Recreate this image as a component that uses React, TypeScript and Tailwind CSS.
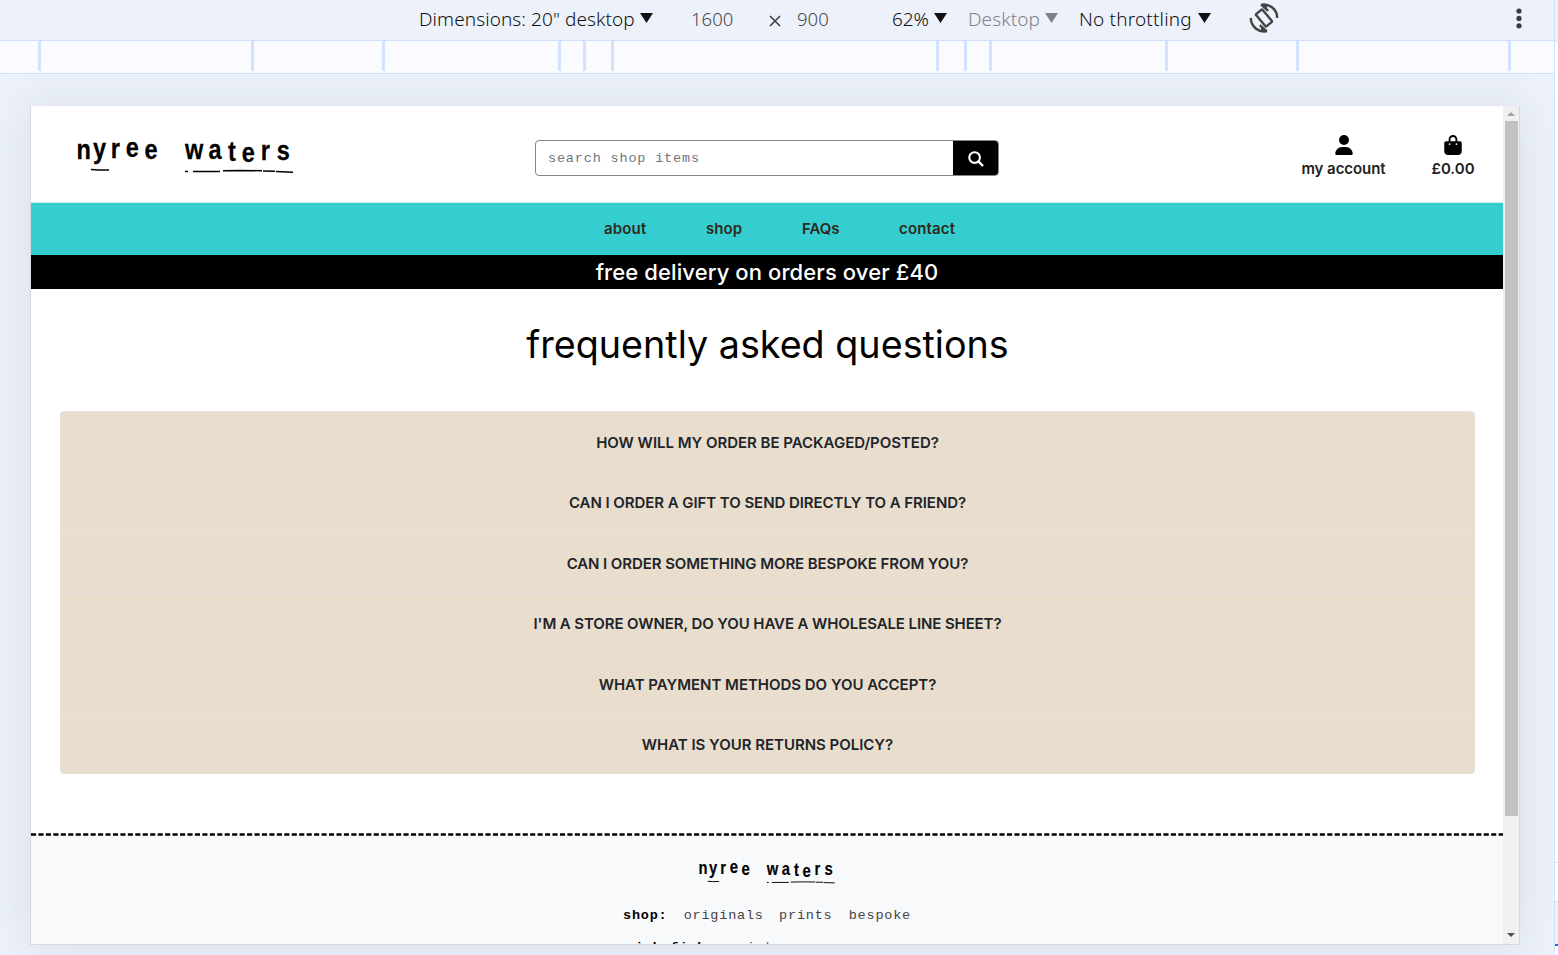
import React from "react";
import { FaUser, FaBagShopping } from "react-icons/fa6";

type Letter = { ch: string; x: number; y: number };

const letters: Letter[] = [
  { ch: "n", x: -0.6, y: 26.6 },
  { ch: "y", x: 16, y: 25.6 },
  { ch: "r", x: 33.8, y: 26 },
  { ch: "e", x: 48.8, y: 25 },
  { ch: "e", x: 67.6, y: 27.2 },
  { ch: "w", x: 108, y: 27 },
  { ch: "a", x: 131.5, y: 27 },
  { ch: "t", x: 151, y: 28.5 },
  { ch: "e", x: 164.8, y: 30 },
  { ch: "r", x: 183.7, y: 28 },
  { ch: "s", x: 199.8, y: 27.8 },
];

function Logo({ className }: { className: string }) {
  return (
    <svg viewBox="0 -6 218 46" className={`overflow-visible ${className}`} aria-label="nyree waters">
      {letters.map((l, i) => (
        <text
          key={i}
          transform={`translate(${l.x} ${l.y - 5}) scale(0.84 1)`}
          fontFamily="Liberation Sans, Arial, sans-serif"
          fontWeight="700"
          fontSize="28"
          fill="#000"
          stroke="#000"
          strokeWidth="0.3"
        >
          {l.ch}
        </text>
      ))}
      <path
        d="M14 32.6l8 .5 10-.2M108 34.4h3M116 34.4h27M146 33.8l18-.3 21 .2M186 34l12 .2M199 34.6l17 .6"
        stroke="#000"
        strokeWidth="1.5"
        fill="none"
      />
    </svg>
  );
}

function Caret({ className }: { className: string }) {
  return (
    <svg viewBox="0 0 13 10" className={`h-[10px] w-[13px] shrink-0 ${className}`}>
      <path d="M0 0h13L6.5 10z" fill="currentColor" />
    </svg>
  );
}

function RotateIcon() {
  return (
    <svg viewBox="0 0 30 30" className="mb-[2px] size-[30px] shrink-0" fill="none" stroke="#444" strokeWidth="2.4">
      <rect x="7" y="10.8" width="16" height="8.4" rx="1" transform="rotate(50 15 15)" />
      <path d="M12 1.8A13.4 13.4 0 0 1 28.2 15" />
      <path d="M18 28.2A13.4 13.4 0 0 1 1.8 15" />
      <path d="M12.2 1.6l7 6.2M17.8 28.4l-7-6.2" />
      <path d="M12.5 2l5.6 0 0 4.6zM17.5 28l-5.6 0 0-4.6z" fill="#444" stroke="none" />
    </svg>
  );
}

function Toolbar() {
  return (
    <div className="flex h-10 items-center pb-[2px] pl-[419px] font-['Noto_Sans','Open_Sans',sans-serif] text-[19px] leading-[38px] text-[#111]">
      <div className="flex w-[272px] items-center gap-[5px] whitespace-pre">
        <span className="font-[350] tracking-[0.08px]">Dimensions: 20" desktop</span>
        <Caret className="mb-[2px]" />
      </div>
      <span className="w-[78px] text-[18.5px] font-[350] text-[#4a4a4a]">1600</span>
      <svg viewBox="0 0 12 12" className="mt-[4px] mr-[16px] size-3">
        <path d="M1 1l10 10M11 1L1 11" stroke="#444" strokeWidth="1.7" />
      </svg>
      <span className="w-[95px] text-[18.5px] font-[350] text-[#4a4a4a]">900</span>
      <div className="flex w-[76px] items-center gap-[5px]">
        <span className="font-[350] tracking-[-0.15px]">62%</span>
        <Caret className="mb-[2px]" />
      </div>
      <div className="flex w-[111px] items-center gap-[5px] text-[#808186]">
        <span className="font-[350] tracking-[0.1px]">Desktop</span>
        <Caret className="mb-[2px]" />
      </div>
      <div className="flex w-[170px] items-center gap-[6px] whitespace-pre">
        <span className="font-[350] tracking-[0.17px]">No throttling</span>
        <Caret className="mb-[2px]" />
      </div>
      <RotateIcon />
      <svg viewBox="0 0 6 22" className="mr-[32px] ml-auto h-[22px] w-[6px]">
        <circle cx="3" cy="3" r="2.6" fill="#3c3c3c" />
        <circle cx="3" cy="10.4" r="2.6" fill="#3c3c3c" />
        <circle cx="3" cy="17.8" r="2.6" fill="#3c3c3c" />
      </svg>
    </div>
  );
}

function Ruler() {
  const marks = [38, 251, 382, 558, 583, 611, 936, 964, 989, 1165, 1296, 1508];
  return (
    <div className="flex h-[34px] border-y border-[#d0e0fb] bg-[#f9fbff]">
      {marks.map((m, i) => (
        <span
          key={m}
          className="h-[30px] w-[3px] shrink-0 bg-[#d3e3fd]"
          style={{ marginLeft: i === 0 ? m : m - marks[i - 1] - 3 }}
        />
      ))}
    </div>
  );
}

function Header() {
  return (
    <header className="flex h-[97px] shrink-0 items-start border-b border-[#d5efef]">
      <div className="w-[504px] pt-[25px] pl-[46px]">
        <Logo className="h-[46px] w-[218px]" />
      </div>
      <div className="mt-[34px] flex h-[36px] w-[464px] rounded-[4px] border border-[#858585]">
        <div className="flex w-[417px] items-center pt-[2px] pl-3 font-['Liberation_Mono',monospace] text-[13.5px] tracking-[0.83px] text-[#6c757d]">
          search shop items
        </div>
        <button className="flex w-[45px] items-center justify-center rounded-r-[3px] bg-black text-white">
          <svg viewBox="0 0 16 16" className="mt-[1px] size-4" fill="none" stroke="currentColor">
            <circle cx="6.6" cy="6.6" r="5.3" strokeWidth="2.1" />
            <path d="M10.4 10.4l4.6 4.6" strokeWidth="2.4" />
          </svg>
        </button>
      </div>
      <div className="ml-[302px] flex w-[85px] flex-col items-center pt-[29px] text-[15px] font-[560] text-[#222]">
        <FaUser className="size-[20px] text-black" />
        <span className="mt-[3px] leading-[22px] tracking-[-0.05px] whitespace-nowrap">my account</span>
      </div>
      <div className="ml-[44px] flex w-[46px] flex-col items-center pt-[29px] text-[15px] font-[560] text-[#222]">
        <FaBagShopping className="size-[20px] text-black" />
        <span className="mt-[3px] leading-[22px]">£0.00</span>
      </div>
    </header>
  );
}

const questions = [
  { q: "HOW WILL MY ORDER BE PACKAGED/POSTED?", line: "border-[#e6ddd1]", track: "tracking-[-0.02px]" },
  { q: "CAN I ORDER A GIFT TO SEND DIRECTLY TO A FRIEND?", line: "border-[#e9e3db]", track: "tracking-[-0.06px]" },
  { q: "CAN I ORDER SOMETHING MORE BESPOKE FROM YOU?", line: "border-[#e2dedb]", track: "tracking-[-0.08px]" },
  { q: "I'M A STORE OWNER, DO YOU HAVE A WHOLESALE LINE SHEET?", line: "border-[#e8e1d8]", track: "tracking-[-0.1px]" },
  { q: "WHAT PAYMENT METHODS DO YOU ACCEPT?", line: "border-[#e9e3db]", track: "tracking-[-0.02px]" },
  { q: "WHAT IS YOUR RETURNS POLICY?", line: "border-transparent", track: "tracking-[-0.02px]" },
];

function Shop() {
  return (
    <div className="flex h-[838px] w-[1472px] flex-col overflow-hidden bg-white font-['Inter',sans-serif]">
      <Header />
      <nav className="flex h-[52px] shrink-0 items-center bg-[#35cdd0] pl-[573px] text-[15px] font-semibold text-[#2f2a1c]">
        <span className="w-[102px] tracking-[0.15px]">about</span>
        <span className="w-[96px] tracking-[0.1px]">shop</span>
        <span className="w-[97px]">FAQs</span>
        <span className="tracking-[0.15px]">contact</span>
      </nav>
      <div className="flex h-[34px] shrink-0 items-center justify-center bg-black text-[22px] font-medium tracking-[0.1px] text-white">
        free delivery on orders over £40
      </div>
      <h1 className="mt-[26px] shrink-0 pl-px text-center text-[37.7px] leading-[58px] text-black">
        frequently asked questions
      </h1>
      <div className="mt-[38px] ml-[29px] h-[363px] w-[1415px] shrink-0 overflow-hidden rounded-[4px] border border-[#e6e0d9] bg-[#e9dece]">
        {questions.map((item) => (
          <div
            key={item.q}
            className={`flex h-[60.4px] items-center justify-center border-b pt-[3px] text-[15px] font-semibold text-[#212529] ${item.line} ${item.track}`}
          >
            {item.q}
          </div>
        ))}
      </div>
      <svg viewBox="0 0 1472 3" className="mt-[59px] h-[3px] w-[1472px] shrink-0">
        <path d="M0 1.5H1472" stroke="#000" strokeWidth="2.6" strokeDasharray="5.1 2.35" />
      </svg>
      <footer className="flex grow flex-col items-center bg-[#f8f9fb] font-['Liberation_Mono',monospace] text-[13.5px] tracking-[0.8px]">
        <Logo className="mt-[21px] h-[29px] w-[137px] shrink-0" />
        <div className="mt-[20px] flex w-[288px] shrink-0 leading-[20px] text-[#444]">
          <span className="w-[61px] font-bold text-black">shop:</span>
          <span className="w-[96px]">originals</span>
          <span className="w-[70px]">prints</span>
          <span>bespoke</span>
        </div>
        <div className="mt-[12px] flex w-[282px] shrink-0 leading-[20px] text-[#444]">
          <span className="w-[103px] font-bold text-black">nish fish:</span>
          <span>prints</span>
        </div>
      </footer>
    </div>
  );
}

function Scrollbar() {
  return (
    <div className="flex h-[838px] w-4 flex-col items-center bg-[#f0f0f0]">
      <svg viewBox="0 0 16 15" className="h-[15px] w-4">
        <path d="M4 10l4-4 4 4z" fill="#a3a3a3" />
      </svg>
      <div className="h-[695px] w-[13px] bg-[#c1c1c1]" />
      <svg viewBox="0 0 16 15" className="mt-auto mb-[1px] h-[15px] w-4">
        <path d="M4 5h8l-4 4z" fill="#505050" />
      </svg>
    </div>
  );
}

export default function App() {
  return (
    <div className="flex h-[955px] w-[1558px] overflow-hidden bg-[#ecf1fa]">
      <div className="flex w-[1554px] shrink-0 flex-col">
        <Toolbar />
        <Ruler />
        <div className="grow overflow-hidden pt-8 pl-[30px]">
          <div className="flex h-[839px] w-[1490px] border border-t-0 border-[#d6d8dc] shadow-[0_0_40px_rgba(120,135,140,0.17)]">
            <Shop />
            <Scrollbar />
          </div>
        </div>
      </div>
      <div className="flex w-1 shrink-0 flex-col border-l border-[#d3e3fd] bg-white">
        <div className="h-[42px] border-b border-[#d3e3fd] bg-[#ecf1fa]" />
        <div className="h-[820px]" />
        <div className="h-10 border-y border-[#d3e3fd] bg-white" />
        <div className="h-[42px] bg-[#ecf1fa]" />
        <div className="h-[2px] bg-[#1a6cf0]" />
      </div>
    </div>
  );
}
